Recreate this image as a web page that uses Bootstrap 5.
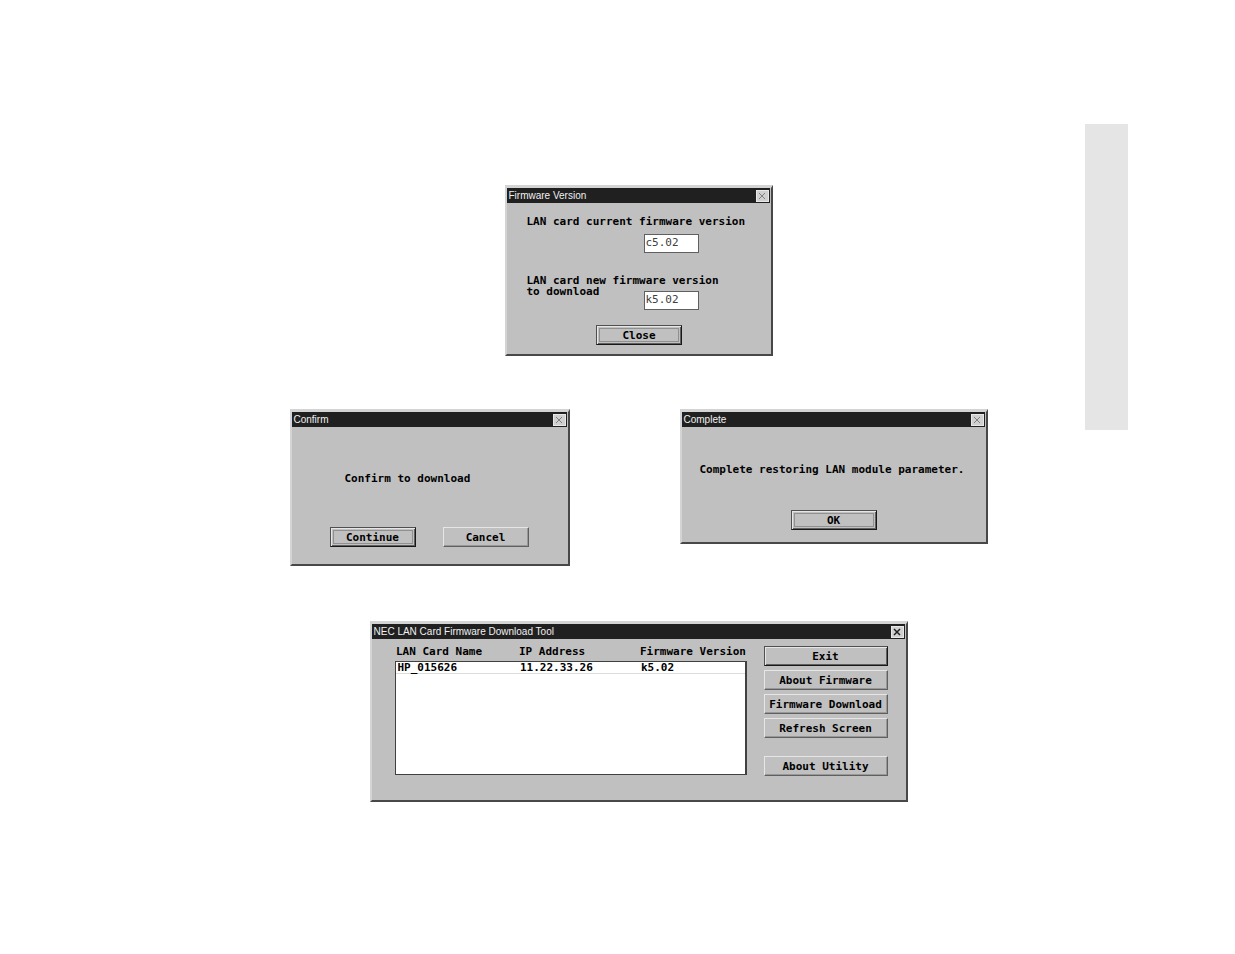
<!DOCTYPE html>
<html lang="en">
<head>
<meta charset="utf-8">
<meta name="viewport" content="width=device-width, initial-scale=1">
<title>LAN Card Firmware Download</title>
<link rel="stylesheet" href="https://cdn.jsdelivr.net/npm/bootstrap@5.3.0/dist/css/bootstrap.min.css">
<style>
  body { background: #fff; color: #000; font: bold 11px/11px "DejaVu Sans Mono", "Liberation Mono", monospace; }
  .page { padding: 124px 107px 64px 192px; }
  .page-tab { width: 43px; height: 306px; background: #e5e5e5; }
  .windows { padding-top: 61px; }

  .win { background: #c0c0c0; border: 2px solid #d4d4d4; border-top-width: 3px; border-right-color: #484848; border-bottom-color: #484848; width: 100%; }
  .win-version { max-width: 268px; }
  .win-confirm { max-width: 280px; }
  .win-complete { max-width: 308px; }
  .win-tool { max-width: 538px; }
  .pair { width: 100%; margin: 53px 0 55px; column-gap: 110px; row-gap: 24px; }

  .titlebar { background: #202020; color: #f0f0f0; font: 10px/15px "Liberation Sans", Arial, sans-serif; padding: 0 1px 0 2px; margin-right: 1px; }
  .titlebar h2 { font: inherit; }
  .win-close { width: 13px; height: 12px; padding: 0; border: 1px solid #e8e8e8; background: #d0d0d0; color: #808080; line-height: 0; }
  .win-close svg { width: 10px; height: 10px; }
  .win-tool .win-close { color: #202020; }

  .push { height: 20px; padding: 0; font: inherit; color: #000; background: #c0c0c0; border: 1px solid; border-color: #e6e6e6 #606060 #606060 #e6e6e6; box-shadow: inset -1px -1px 0 #989898; white-space: nowrap; }
  .push-sm { width: 86px; }
  .push-default { border-color: #505050 #181818 #181818 #505050; box-shadow: inset 1px 1px 0 #e6e6e6, inset -1px -1px 0 #606060; }
  .push-focus { outline: 1px solid #909090; outline-offset: -4px; }

  .version-body { padding: 13px 19px 9px 20px; }
  .version-box { width: 55px; height: 19px; margin-left: 117px; padding: 0 0 3px 1px; border: 1px solid #606060; border-radius: 0; background: #fff; color: #404040; font: 11px/13px "DejaVu Sans Mono", "Liberation Mono", monospace; }
  .version-current { margin-top: 7px; margin-bottom: 22px; }
  .version-next { margin-bottom: 15px; }
  .version-next .version-box { margin: 5px 53px 0 auto; }

  .confirm-body { padding: 46px 38px 17px; }
  .confirm-body p { margin: 0 15px 43px; }
  .confirm-body .actions { gap: 27px; }
  .complete-body { padding: 37px 18px 12px; }
  .complete-body p { margin: 0 0 35px; white-space: nowrap; }

  .tool-body { padding: 7px 18px 24px 23px; gap: 17px; }
  .cards { table-layout: fixed; border-collapse: collapse; width: 100%; }
  .cards th { height: 15px; padding: 0 0 4px 1px; white-space: nowrap; }
  .cards tbody { background: #fff; border: 1px solid #404040; border-right-width: 2px; }
  .cards td { padding: 0 0 0 2px; white-space: nowrap; }
  .cards .entry td { box-shadow: 0 1px 0 #dcdcdc; }
  .cards .blank { height: 101px; }
  .col-id { width: 123px; }
  .col-ip { width: 121px; }
  .tool-actions { width: 124px; gap: 4px; }
  .tool-actions .push:last-child { margin-top: 14px; }
</style>
</head>
<body>
<div class="page d-flex align-items-start">
  <main class="windows flex-grow-1 d-flex flex-column align-items-center">

    <section class="win win-version">
      <header class="titlebar d-flex justify-content-between align-items-center">
        <h2 class="m-0">Firmware Version</h2>
        <button type="button" class="win-close" aria-label="Close window"><svg viewBox="0 0 10 10" stroke="currentColor"><path d="M2 2l6 6M8 2l-6 6"/></svg></button>
      </header>
      <div class="version-body">
        <label class="d-block" for="current">LAN card current firmware version</label>
        <div class="version-current"><input id="current" class="version-box d-block" value="c5.02" readonly></div>
        <label class="version-next d-block" for="next">LAN card new firmware version
          <span class="d-flex align-items-start">to download
            <input id="next" class="version-box" value="k5.02" readonly>
          </span>
        </label>
        <div class="d-flex justify-content-center"><button type="button" class="push push-sm push-default push-focus">Close</button></div>
      </div>
    </section>

    <div class="pair d-flex flex-wrap flex-lg-nowrap justify-content-center align-items-start">
      <section class="win win-confirm">
        <header class="titlebar d-flex justify-content-between align-items-center">
          <h2 class="m-0">Confirm</h2>
          <button type="button" class="win-close" aria-label="Close window"><svg viewBox="0 0 10 10" stroke="currentColor"><path d="M2 2l6 6M8 2l-6 6"/></svg></button>
        </header>
        <div class="confirm-body">
          <p>Confirm to download</p>
          <div class="actions d-flex">
            <button type="button" class="push push-sm push-default push-focus">Continue</button>
            <button type="button" class="push push-sm">Cancel</button>
          </div>
        </div>
      </section>

      <section class="win win-complete">
        <header class="titlebar d-flex justify-content-between align-items-center">
          <h2 class="m-0">Complete</h2>
          <button type="button" class="win-close" aria-label="Close window"><svg viewBox="0 0 10 10" stroke="currentColor"><path d="M2 2l6 6M8 2l-6 6"/></svg></button>
        </header>
        <div class="complete-body">
          <p>Complete restoring LAN module parameter.</p>
          <div class="d-flex justify-content-center"><button type="button" class="push push-sm push-default push-focus">OK</button></div>
        </div>
      </section>
    </div>

    <section class="win win-tool">
      <header class="titlebar d-flex justify-content-between align-items-center">
        <h2 class="m-0">NEC LAN Card Firmware Download Tool</h2>
        <button type="button" class="win-close" aria-label="Close window"><svg viewBox="0 0 10 10" stroke="currentColor" stroke-width="1.5"><path d="M2 2l6 6M8 2l-6 6"/></svg></button>
      </header>
      <div class="tool-body d-flex align-items-start">
        <div class="flex-grow-1">
          <table class="cards">
            <thead>
              <tr><th class="col-id" scope="col">LAN Card Name</th><th class="col-ip" scope="col">IP Address</th><th scope="col">Firmware Version</th></tr>
            </thead>
            <tbody>
              <tr class="entry"><td>HP_015626</td><td>11.22.33.26</td><td>k5.02</td></tr>
              <tr><td class="blank" colspan="3"></td></tr>
            </tbody>
          </table>
        </div>
        <div class="tool-actions d-flex flex-column flex-shrink-0">
          <button type="button" class="push push-default">Exit</button>
          <button type="button" class="push">About Firmware</button>
          <button type="button" class="push">Firmware Download</button>
          <button type="button" class="push">Refresh Screen</button>
          <button type="button" class="push">About Utility</button>
        </div>
      </div>
    </section>

  </main>
  <aside class="page-tab flex-shrink-0"></aside>
</div>
<script src="https://cdn.jsdelivr.net/npm/bootstrap@5.3.0/dist/js/bootstrap.bundle.min.js"></script>
</body>
</html>
